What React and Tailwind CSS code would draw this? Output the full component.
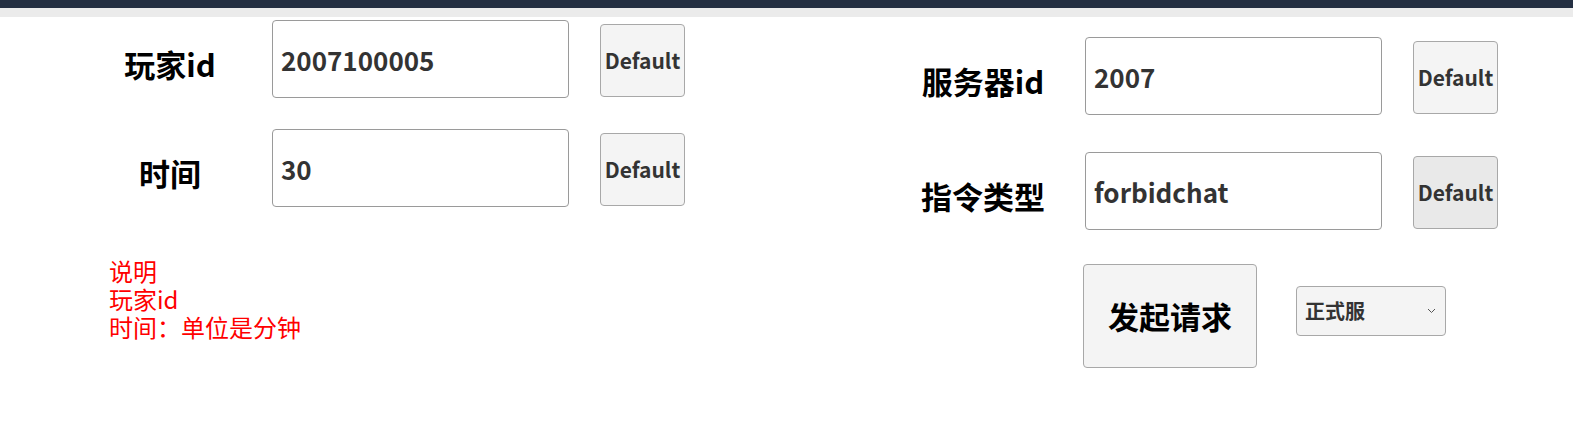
import { useState } from 'react';

const font = { fontFamily: '"Noto Sans CJK SC", "Noto Sans", sans-serif' };

function Field({ label, value, onChange, pressed }) {
  return (
    <div className="flex items-end">
      <div className="w-[160px] self-center pt-[8px] text-center text-[31px] font-bold text-black leading-none">{label}</div>
      <input
        value={value}
        onChange={e => onChange(e.target.value)}
        className="ml-[22px] h-[78px] w-[297px] rounded-[4px] border border-[#9a9a9a] bg-white pl-[8px] text-[26px] font-semibold text-[#333] outline-none"
        style={font}
      />
      <button
        className={`ml-[31px] mb-[1px] h-[73px] w-[85px] rounded-[4px] border border-[#a8a8a8] text-[21px] font-semibold text-[#333] ${pressed ? 'bg-[#e9e9e9]' : 'bg-[#f4f4f4]'}`}
        style={font}
      >
        Default
      </button>
    </div>
  );
}

export default function App() {
  const [playerId, setPlayerId] = useState('2007100005');
  const [time, setTime] = useState('30');
  const [serverId, setServerId] = useState('2007');
  const [cmd, setCmd] = useState('forbidchat');

  return (
    <div className="min-h-[440px] bg-white" style={font}>
      <div className="h-[8px] bg-[#242f42]" />
      <div className="h-[9px] bg-[#ebebeb]" />
      <div className="flex">
        <div className="w-[903px] pl-[90px] pt-[3px]">
          <div className="flex flex-col gap-[31px]">
            <Field label="玩家id" value={playerId} onChange={setPlayerId} />
            <Field label="时间" value={time} onChange={setTime} />
          </div>
          <div className="ml-[19px] mt-[50px] text-[24px] leading-[28px] text-[#f00]">
            <div>说明</div>
            <div>玩家id</div>
            <div>时间：单位是分钟</div>
          </div>
        </div>
        <div className="pt-[20px]">
          <div className="flex flex-col gap-[37px]">
            <Field label="服务器id" value={serverId} onChange={setServerId} />
            <Field label="指令类型" value={cmd} onChange={setCmd} pressed />
          </div>
          <div className="mt-[34px] ml-[180px] flex items-start">
            <button className="h-[104px] w-[174px] rounded-[4px] border border-[#a8a8a8] bg-[#f4f4f4] text-[31px] font-bold text-black" style={font}>
              发起请求
            </button>
            <div className="relative ml-[39px] mt-[22px]">
              <select
                className="h-[50px] w-[150px] appearance-none rounded-[4px] border border-[#a8a8a8] bg-[#f4f4f4] pl-[8px] text-[20px] font-semibold text-[#333] outline-none"
                style={font}
              >
                <option>正式服</option>
                <option>测试服</option>
              </select>
              <svg className="pointer-events-none absolute right-[10px] top-[22px] h-[6px] w-[9px]" viewBox="0 0 9 6" fill="none" stroke="#555" strokeWidth="1">
                <path d="M1 1l3.5 3.5L8 1" />
              </svg>
            </div>
          </div>
        </div>
      </div>
    </div>
  );
}
